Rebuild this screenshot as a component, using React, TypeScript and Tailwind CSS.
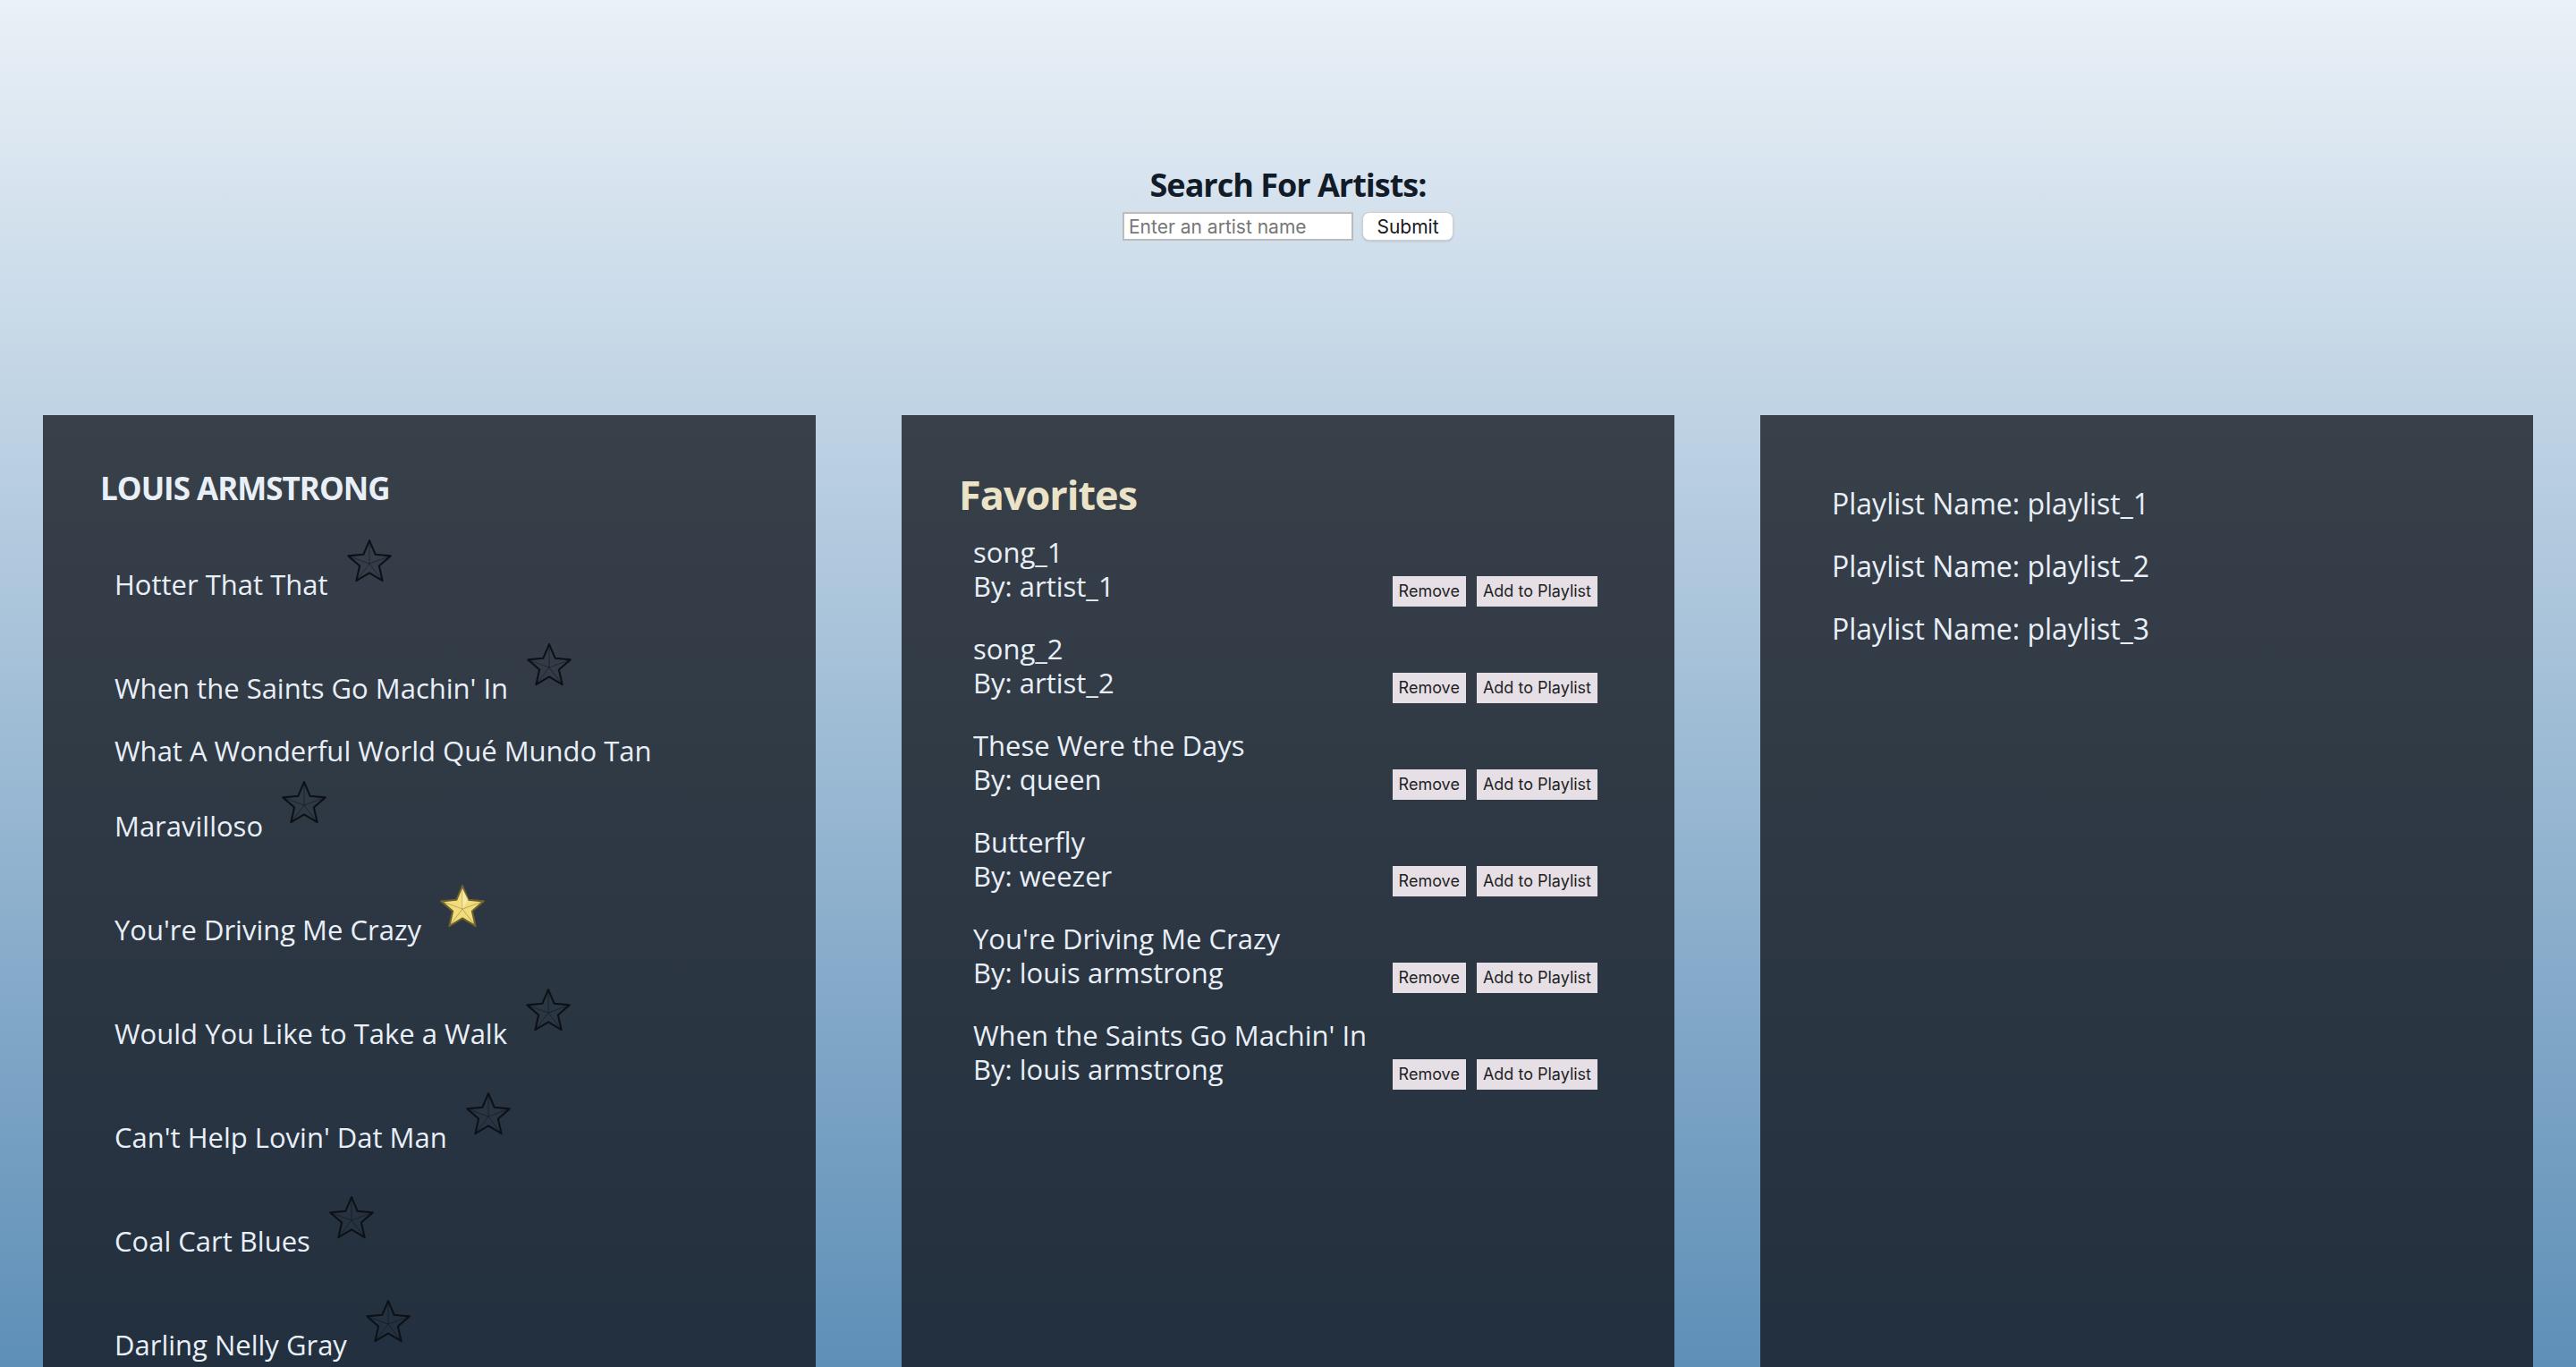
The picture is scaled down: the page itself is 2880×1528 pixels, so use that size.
import React from 'react';

const songs = [
  { title: 'Hotter That That', fav: false },
  { title: "When the Saints Go Machin' In", fav: false },
  { title: 'What A Wonderful World Qué Mundo Tan Maravilloso', fav: false },
  { title: "You're Driving Me Crazy", fav: true },
  { title: 'Would You Like to Take a Walk', fav: false },
  { title: "Can't Help Lovin' Dat Man", fav: false },
  { title: 'Coal Cart Blues', fav: false },
  { title: 'Darling Nelly Gray', fav: false },
];

const favorites = [
  { song: 'song_1', artist: 'artist_1' },
  { song: 'song_2', artist: 'artist_2' },
  { song: 'These Were the Days', artist: 'queen' },
  { song: 'Butterfly', artist: 'weezer' },
  { song: "You're Driving Me Crazy", artist: 'louis armstrong' },
  { song: "When the Saints Go Machin' In", artist: 'louis armstrong' },
];

const playlists = ['playlist_1', 'playlist_2', 'playlist_3'];

// outer points and inner points of a 5 point star, viewBox 0 0 100 100
const outer = [
  [50, 4],
  [95.6, 37.2],
  [78.2, 90.8],
  [21.8, 90.8],
  [4.4, 37.2],
];
const inner = [
  [62.9, 34.2],
  [70.9, 58.8],
  [50, 74],
  [29.1, 58.8],
  [37.1, 34.2],
];
const starPoints = outer
  .flatMap((p, i) => [p, inner[i]])
  .map((p) => p.join(','))
  .join(' ');

const Star: React.FC<{ filled: boolean }> = ({ filled }) => (
  <svg
    viewBox="0 0 100 100"
    className="inline-block w-[56px] h-[52px] mt-[14px] mb-[11px] ml-[18px] align-baseline"
  >
    <polygon
      points={starPoints}
      fill={filled ? '#f2dc7c' : 'none'}
      stroke={filled ? '#6d5f2c' : '#0d1117'}
      strokeWidth={4}
      strokeLinejoin="round"
    />
    {outer.map((p, i) => (
      <line
        key={i}
        x1={50}
        y1={54}
        x2={p[0]}
        y2={p[1]}
        stroke={filled ? '#8a7a3a' : '#0d1117'}
        strokeWidth={1}
      />
    ))}
    {filled && <polygon points="50,10 50,54 62.9,34.2" fill="#fbefb0" opacity={0.7} />}
  </svg>
);

export default function App() {
  return (
    <div
      className="h-screen overflow-hidden flex flex-col bg-gradient-to-b from-[#eaf1f7] to-[#5e8fb7]"
      style={{ fontFamily: '"Open Sans", "Noto Sans", sans-serif' }}
    >
      {/* Search header */}
      <div className="pt-[187px] flex flex-col items-center">
        <h1 className="text-[36px] leading-[40px] font-bold text-[#121c28] tracking-[-1px]">
          Search For Artists:
        </h1>
        <div className="mt-[10px] flex items-center" style={{ fontFamily: 'Inter, "Liberation Sans", sans-serif' }}>
          <input
            type="text"
            placeholder="Enter an artist name"
            className="w-[258px] h-[32px] border-2 border-[#bcbcbc] bg-white px-[5px] text-[21px] text-black placeholder:text-[#777777] outline-none"
          />
          <button className="ml-[10px] w-[102px] h-[32px] rounded-[8px] bg-white border border-[#cfcfcf] shadow-sm text-[21px] text-[#1a1a1a]">
            Submit
          </button>
        </div>
      </div>

      {/* Panels */}
      <div className="mt-[195px] flex-1 grid grid-cols-3 gap-[96px] px-[48px] min-h-0">
        {/* Artist songs */}
        <div className="bg-gradient-to-b from-[#384049] to-[#222f3e] px-[64px] pt-[58px] text-[#e9eff7]">
          <h2 className="text-[35px] leading-[48px] font-bold text-[#e9eff7] tracking-[-1px]">LOUIS ARMSTRONG</h2>
          <ul className="mt-[18px] pl-[16px]">
            {songs.map((s) => (
              <li key={s.title} className="mb-[32px] text-[31px] leading-[38px]">
                {s.title}
                <Star filled={s.fav} />
              </li>
            ))}
          </ul>
        </div>

        {/* Favorites */}
        <div className="bg-gradient-to-b from-[#384049] to-[#222f3e] px-[64px] pt-[61px] text-[#e9eff7]">
          <h2 className="text-[45px] leading-[56px] font-bold text-[#ebe3c8] tracking-[-1px]">Favorites</h2>
          <ul className="mt-[17px] pl-[16px] pr-[22px]">
            {favorites.map((f) => (
              <li key={f.song} className="mb-[28px] text-[31px] leading-[38px]">
                <div>{f.song}</div>
                <div className="flex items-baseline justify-between">
                  <span>By: {f.artist}</span>
                  <span
                    className="flex items-baseline gap-[12px]"
                    style={{ fontFamily: 'Inter, "Liberation Sans", sans-serif' }}
                  >
                    <button className="h-[34px] px-[7px] bg-[#e6dfe6] text-[18px] leading-[22px] text-[#1f1f1f]">
                      Remove
                    </button>
                    <button className="h-[34px] px-[7px] bg-[#e6dfe6] text-[18px] leading-[22px] text-[#1f1f1f]">
                      Add to Playlist
                    </button>
                  </span>
                </div>
              </li>
            ))}
          </ul>
        </div>

        {/* Playlists */}
        <div className="bg-gradient-to-b from-[#384049] to-[#222f3e] px-[64px] pt-[80px] text-[#e9eff7]">
          <ul className="pl-[16px]">
            {playlists.map((p) => (
              <li key={p} className="mb-[32px] text-[32px] leading-[38px]">
                Playlist Name: {p}
              </li>
            ))}
          </ul>
        </div>
      </div>
    </div>
  );
}
